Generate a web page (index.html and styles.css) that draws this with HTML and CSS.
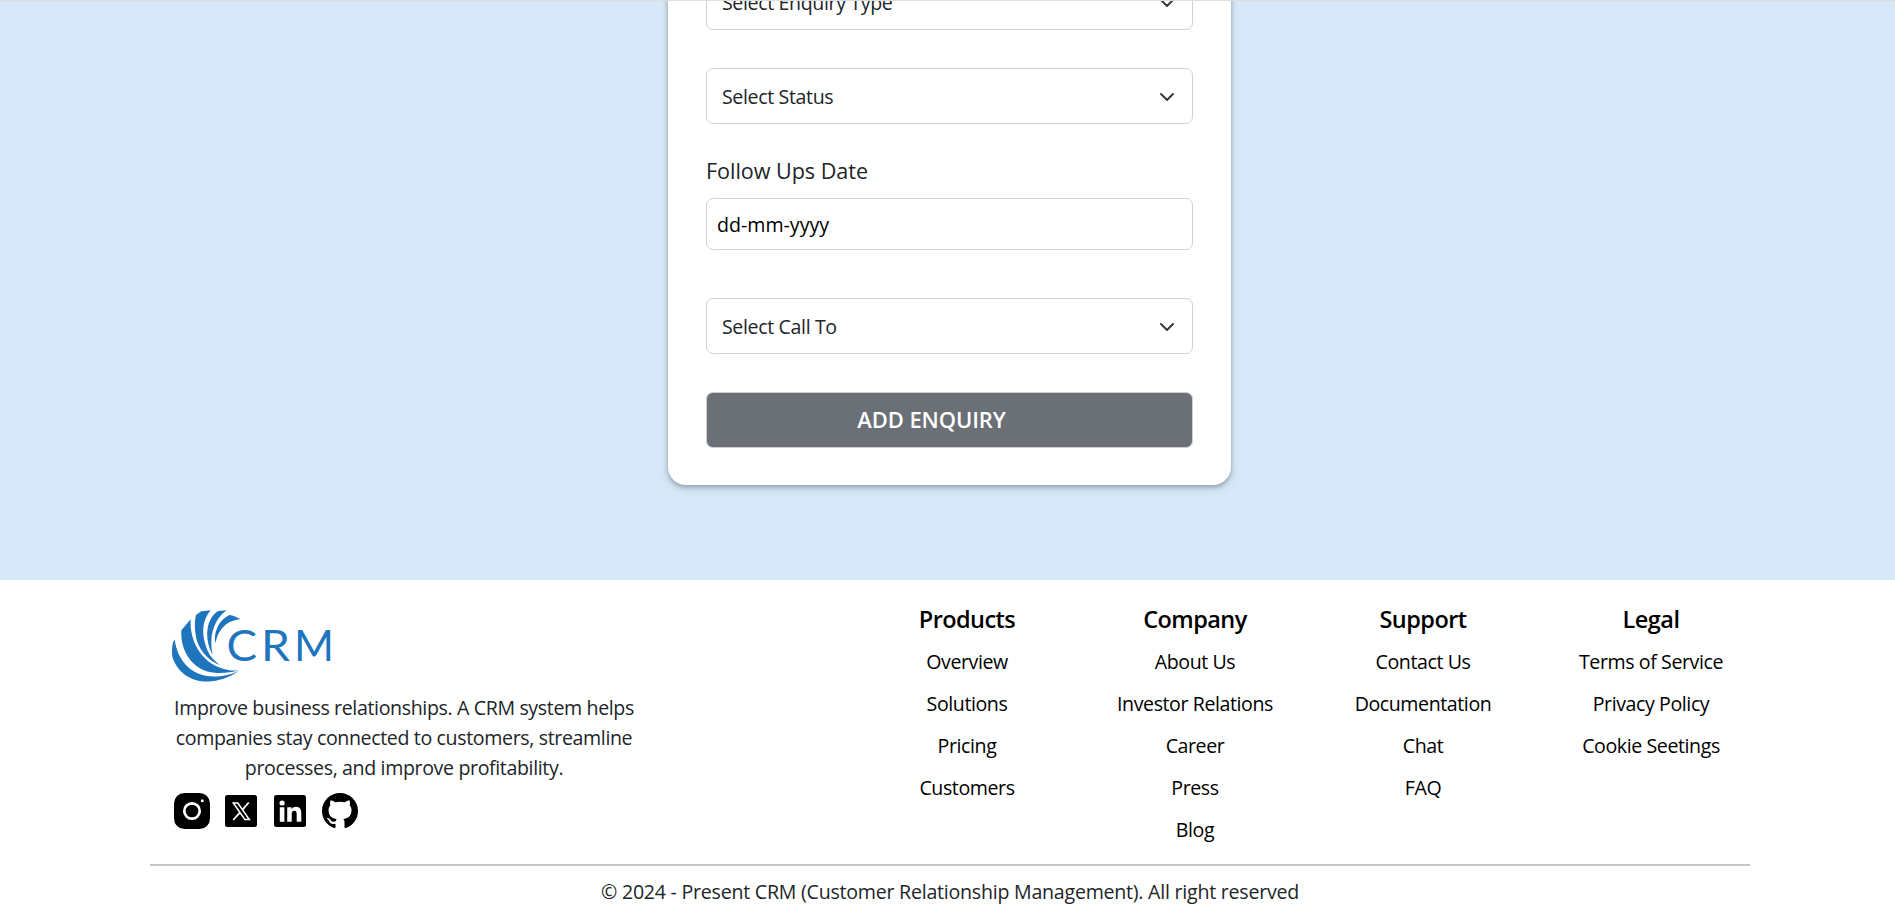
FILE: index.html
```html
<!DOCTYPE html>
<html lang="en">
<head>
<meta charset="utf-8">
<title>CRM - Add Enquiry</title>
<link rel="stylesheet" href="styles.css">
</head>
<body>
<svg width="0" height="0" class="defs">
  <symbol id="chevron" viewBox="0 0 16 16"><path d="m2 5 6 6 6-6" fill="none" stroke="#343a40" stroke-width="2" stroke-linecap="round" stroke-linejoin="round"/></symbol>
</svg>
<main class="page">
  <form class="card">
    <div class="field select"><span>Select Enquiry Type</span><svg class="chevron"><use href="#chevron"/></svg></div>
    <div class="field select"><span>Select Status</span><svg class="chevron"><use href="#chevron"/></svg></div>
    <div class="date-group">
      <label class="label">Follow Ups Date</label>
      <div class="field date">dd-mm-yyyy</div>
    </div>
    <div class="field select"><span>Select Call To</span><svg class="chevron"><use href="#chevron"/></svg></div>
    <button type="button" class="submit">ADD ENQUIRY</button>
  </form>
</main>
<footer class="footer">
  <div class="footer-top">
    <section class="brand">
      <svg class="logo" viewBox="170 608 164 76">
        <g fill="#1e75bd" transform="translate(168 606) scale(.33333)">
          <path d="M20 100C12 112 10 135 14 155C30 205 80 232 130 226C165 222 195 208 212 194C190 207 155 213 123 211C70 206 28 165 20 100Z"/>
          <path d="M40 73L68 40C64 105 100 170 165 188C182 193 198 195 212 193C185 202 150 203 128 199C78 190 36 140 40 73Z"/>
          <path d="M84 27L100 16L128 13C105 40 100 75 112 115C120 145 135 162 157 178C120 162 87 130 82 80C80 60 80 40 84 27Z"/>
          <path d="M150 15L176 13C156 27 138 50 131 90C129 110 130 130 134 146C122 125 116 100 118 75C121 45 132 28 150 15Z"/>
          <path d="M185 27C195 28 207 33 217 40C195 42 175 50 160 70C151 82 145 95 143 112C138 95 142 72 155 52C165 38 175 31 185 27Z"/>
        </g>
        <g class="logo-text">
          <text x="226.500" y="660.500" textLength="30.500" lengthAdjust="spacingAndGlyphs">C</text>
          <text x="261" y="660.500" textLength="29" lengthAdjust="spacingAndGlyphs">R</text>
          <text x="294" y="660.500" textLength="40" lengthAdjust="spacingAndGlyphs">M</text>
        </g>
      </svg>
      <p class="tagline">Improve business relationships. A CRM system helps<br>companies stay connected to customers, streamline<br>processes, and improve profitability.</p>
      <div class="social">
        <svg width="36" height="36" viewBox="0 0 36 36"><rect width="36" height="36" rx="10.500"/><circle cx="18" cy="18" r="7.700" fill="none" stroke="#fff" stroke-width="2.700"/><circle cx="28.300" cy="7.700" r="1.500" fill="#fff"/></svg>
        <svg class="social-x" width="32" height="32" viewBox="0 0 32 32"><rect width="32" height="32" rx="2.500"/><path d="M8.300 8H12.800L24.300 24.500H19.800Z" fill="none" stroke="#fff" stroke-width="1.500"/><path d="M23.800 7.500 17.300 14.900M14.900 17.600 8.200 25" fill="none" stroke="#fff" stroke-width="1.800"/></svg>
        <svg class="social-in" width="32" height="32" viewBox="0 0 32 32"><rect width="32" height="32" rx="2.500"/><circle cx="8.100" cy="8" r="2.600" fill="#fff"/><path d="M5.800 12.200h4.600v14.500H5.800zM13.200 12.200h4.400v2c.8-1.400 2.300-2.400 4.300-2.400 4.500 0 5.400 2.900 5.400 6.900v8h-4.600v-7.100c0-1.800-.1-3.900-2.400-3.900s-2.600 1.800-2.600 3.700v7.300h-4.500z" fill="#fff"/></svg>
        <svg width="36" height="36" viewBox="0 0 16 16"><path d="M8 0C3.580 0 0 3.580 0 8c0 3.540 2.290 6.530 5.470 7.590.4.070.55-.17.55-.38 0-.19-.01-.82-.01-1.490-2.010.37-2.530-.49-2.690-.94-.09-.23-.48-.94-.82-1.130-.28-.15-.68-.52-.01-.53.63-.01 1.080.58 1.230.82.72 1.210 1.870.87 2.330.66.07-.52.28-.87.51-1.070-1.780-.2-3.640-.89-3.640-3.950 0-.87.31-1.590.82-2.150-.08-.2-.36-1.020.08-2.120 0 0 .67-.21 2.200.82.64-.18 1.320-.27 2-.27s1.360.09 2 .27c1.530-1.040 2.200-.82 2.200-.82.44 1.100.16 1.920.08 2.120.51.56.82 1.270.82 2.150 0 3.070-1.870 3.750-3.650 3.950.29.25.54.73.54 1.480 0 1.070-.01 1.930-.01 2.200 0 .21.15.46.55.38A8.010 8.010 0 0 0 16 8c0-4.420-3.580-8-8-8z"/></svg>
      </div>
    </section>
    <nav class="links">
      <div class="col"><h2>Products</h2><a>Overview</a><a>Solutions</a><a>Pricing</a><a>Customers</a></div>
      <div class="col"><h2>Company</h2><a>About Us</a><a>Investor Relations</a><a>Career</a><a>Press</a><a>Blog</a></div>
      <div class="col"><h2>Support</h2><a>Contact Us</a><a>Documentation</a><a>Chat</a><a>FAQ</a></div>
      <div class="col"><h2>Legal</h2><a>Terms of Service</a><a>Privacy Policy</a><a>Cookie Seetings</a></div>
    </nav>
  </div>
  <p class="copyright">© 2024 - Present CRM (Customer Relationship Management). All right reserved</p>
</footer>
</body>
</html>
```
FILE: styles.css
```css
* { box-sizing: border-box; }
body {
  margin: 0;
  height: 910px;
  overflow: hidden;
  background: #fff;
  color: #212529;
  font: 19.6px/30px "Open Sans", "Noto Sans", sans-serif;
  letter-spacing: -.37px;
}
.defs { display: block; }
.page {
  display: flex;
  justify-content: center;
  align-items: flex-start;
  height: 580px;
  padding-left: 4px;
  overflow: hidden;
  background: #d7e9f8;
  border-top: 1px solid #dedede;
}
.card {
  display: flex;
  flex-direction: column;
  width: 563px;
  margin-top: -65px;
  padding: 38px 38px 37px;
  background: #fff;
  border-radius: 18px;
  box-shadow: 0 2px 5px rgba(0, 0, 0, .3), 0 4px 12px rgba(0, 0, 0, .08);
}
.field {
  display: flex;
  align-items: center;
  border: 1px solid #d2d2d2;
  border-radius: 7px;
  background: #fff;
}
.select {
  justify-content: space-between;
  height: 56px;
  padding: 1px 17px 0 15px;
  margin-bottom: 38px;
}
.chevron { width: 16px; height: 16px; }
.date-group { margin: -6px 0 48px; }
.label {
  display: block;
  margin-bottom: 12px;
  font-size: 21.600px;
  letter-spacing: -.05px;
}
.date {
  height: 52px;
  padding: 2px 10px 0;
  color: #000;
  letter-spacing: 0;
}
.submit {
  height: 56px;
  padding: 0 36px 2px 0;
  border: 1px solid #cfcfcf;
  border-radius: 7px;
  background: #6b6f76;
  color: #fff;
  font: 600 22px/30px "Open Sans", "Noto Sans", sans-serif;
  letter-spacing: -.08px;
}
.footer {
  width: 1600px;
  margin-left: 150px;
  padding-top: 19px;
}
.footer-top {
  display: flex;
  justify-content: space-between;
  padding: 0 5px 14px 24px;
  border-bottom: 2px solid #c6c6c6;
}
.brand { width: 460px; padding-top: 9px; }
.logo {
  display: block;
  width: 164px;
  height: 76px;
  margin-left: -4px;
}
.logo-text {
  font: 42px Lato, sans-serif;
  letter-spacing: 0;
  fill: #1e75bd;
}
.tagline {
  margin: 9px 0 10px;
  text-align: center;
  white-space: nowrap;
}
.social { display: flex; align-items: center; }
.social-x { margin: 0 17px 0 15px; }
.social-in { margin-right: 16px; }
.links {
  display: grid;
  grid-template-columns: repeat(4, 188px);
  column-gap: 40px;
  height: 251px;
  color: #000;
}
.col {
  display: flex;
  flex-direction: column;
  align-items: center;
  line-height: 42px;
  letter-spacing: -.42px;
}
.col h2 {
  margin: 0 0 2px;
  font-size: 23.500px;
  font-weight: 600;
  line-height: 40px;
  letter-spacing: -.55px;
}
.copyright { margin: 11px 0 0; text-align: center; letter-spacing: -.24px; }
```
